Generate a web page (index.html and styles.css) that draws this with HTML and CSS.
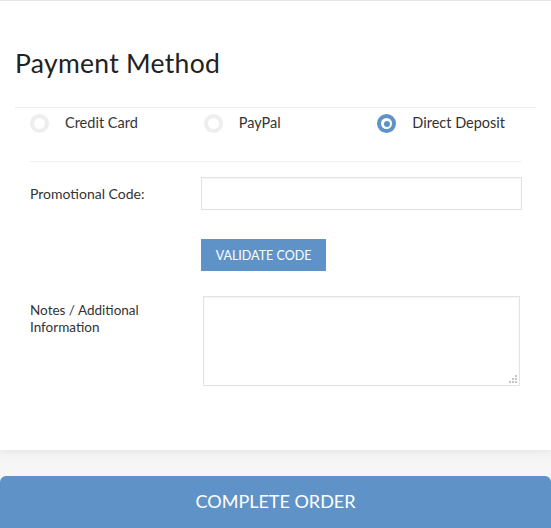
FILE: index.html
```html
<!DOCTYPE html>
<html>
<head>
<meta charset="utf-8">
<link rel="stylesheet" href="styles.css">
</head>
<body>
<div class="card">
  <h2 class="title">Payment Method</h2>
  <div class="methods">
    <label class="method"><span class="radio"></span><span class="mlabel">Credit Card</span></label>
    <label class="method"><span class="radio"></span><span class="mlabel">PayPal</span></label>
    <label class="method"><span class="radio checked"></span><span class="mlabel">Direct Deposit</span></label>
  </div>
  <div class="form">
    <div class="row promo">
      <div class="label">Promotional Code:</div>
      <div class="field"><div class="input"></div></div>
    </div>
    <div class="row">
      <div class="label"></div>
      <div class="field"><button class="validate">VALIDATE CODE</button></div>
    </div>
    <div class="row notes">
      <div class="label">Notes / Additional<br>Information</div>
      <div class="field"><div class="textarea"><svg class="grip" width="9" height="9" viewBox="0 0 9 9"><rect x="7" y="1" width="2" height="2" fill="#c4c4c4"/><rect x="4" y="4" width="2" height="2" fill="#c4c4c4"/><rect x="7" y="4" width="2" height="2" fill="#c4c4c4"/><rect x="1" y="7" width="2" height="2" fill="#c4c4c4"/><rect x="4" y="7" width="2" height="2" fill="#c4c4c4"/><rect x="7" y="7" width="2" height="2" fill="#c4c4c4"/></svg></div></div>
    </div>
  </div>
</div>
<div class="footer">
  <button class="complete">COMPLETE ORDER</button>
</div>
</body>
</html>
```
FILE: styles.css
```css
* { box-sizing: border-box; }
html, body { margin: 0; padding: 0; }
body {
  background: #f6f6f6;
  font-family: Lato, "Open Sans", sans-serif;
  color: #333;
  width: 551px;
  height: 528px;
  overflow: hidden;
}
.card {
  background: #fff;
  border-top: 1px solid #e6e6e6;
  height: 450px;
  padding: 0 15px;
  box-shadow: 0 2px 8px rgba(0,0,0,0.08);
  position: relative;
}
.title {
  margin: 0;
  padding-top: 46px;
  height: 106px;
  font-size: 26.5px;
  font-weight: 400;
  color: #222;
  letter-spacing: 0.3px;
}
.methods {
  border-top: 1px solid #eee;
  display: grid;
  grid-template-columns: 1fr 1fr 1fr;
  height: 54px;
}
.method {
  display: flex;
  align-items: flex-start;
  padding: 6px 15px 0;
}
.radio {
  width: 19px;
  height: 19px;
  border-radius: 50%;
  border: 4px solid #eee;
  background: #fff;
  flex: none;
  position: relative;
}
.radio.checked {
  border-color: #5f93c8;
}
.radio.checked::after {
  content: "";
  position: absolute;
  left: 2.5px;
  top: 2.5px;
  width: 6px;
  height: 6px;
  border-radius: 50%;
  background: #5f93c8;
}
.mlabel {
  margin-left: 16px;
  font-size: 14.5px;
  line-height: 18px;
  color: #333;
}
.form {
  margin: 0 15px;
  border-top: 1px solid #eee;
  padding-top: 15px;
}
.row {
  display: flex;
}
.label {
  width: 171px;
  flex: none;
  font-size: 14px;
  color: #333;
}
.promo .label { padding-top: 8px; }
.field { flex: 1; }
.input {
  height: 33px;
  width: 321px;
  border: 1px solid #e3e3e3;
  box-shadow: inset 0 1px 2px rgba(0,0,0,0.05);
}
.validate {
  margin-top: 29px;
  height: 32px;
  width: 125px;
  border: none;
  background: #5f93c8;
  color: #fff;
  font-family: Lato, "Open Sans", sans-serif;
  font-size: 12.5px;
  padding: 0;
}
.notes { margin-top: 25px; }
.notes .label {
  padding-top: 6px;
  font-size: 13.5px;
  line-height: 16.5px;
}
.notes .field { padding-left: 2px; }
.textarea {
  width: 317px;
  height: 90px;
  border: 1px solid #e3e3e3;
  box-shadow: inset 0 1px 2px rgba(0,0,0,0.05);
  position: relative;
}
.grip {
  position: absolute;
  right: 2px;
  bottom: 2px;
}
.footer {
  padding-top: 26px;
}
.complete {
  display: block;
  width: 551px;
  height: 52px;
  border: none;
  border-radius: 6px 6px 0 0;
  background: #5f93c8;
  color: #fff;
  font-family: Lato, "Open Sans", sans-serif;
  font-size: 18px;
  padding: 0 0 2px;
}
```
